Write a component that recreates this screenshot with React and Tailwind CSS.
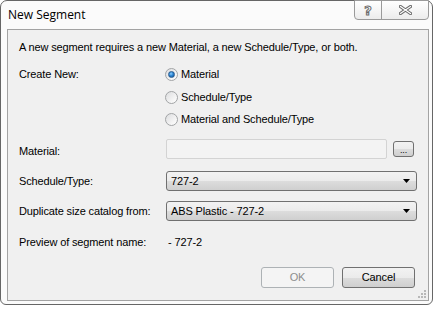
import React from "react";

function Radio({ checked, label, h }) {
  return (
    <div className={`flex items-center ${h}`}>
      <div className="w-[13px] h-[13px] rounded-full border border-[#a2a4a6] bg-[linear-gradient(135deg,#dcdddf,#f4f4f4_65%,#ffffff)] flex items-center justify-center">
        {checked && (
          <div className="w-[7px] h-[7px] rounded-full bg-[radial-gradient(circle_at_40%_35%,#8fd0ff,#2d85d2_45%,#0e4f93)] border border-[#2a5c8e]" />
        )}
      </div>
      <span className="ml-[3px] leading-[13px]">{label}</span>
    </div>
  );
}

function Select({ value }) {
  return (
    <div className="w-[251px] h-[20px] border border-[#707070] rounded-[3px] bg-[linear-gradient(#f2f2f2,#ebebeb_50%,#dddddd_50%,#cfcfcf)] flex items-center pl-[4px] pr-[6px] shrink-0">
      <span className="leading-[13px] flex-1">{value}</span>
      <svg width="7" height="4" viewBox="0 0 7 4">
        <path d="M0 0H7L3.5 4Z" fill="#000" />
      </svg>
    </div>
  );
}

export default function App() {
  return (
    <div className="w-[435px] h-[309px] bg-white font-['Liberation_Sans',Arial,sans-serif] text-[11px] tracking-[-0.13px] text-black">
      <div className="w-[433px] h-[305px] border border-[#666666] rounded-t-[7px] rounded-b-[6px] bg-[#fbfbfb] flex flex-col pl-[6px] pr-[3px] pb-[3px]">
        <div className="h-[28px] flex items-start shrink-0">
          <div className="pl-[1px] pt-[6px] text-[12px] leading-[16px] tracking-normal font-['Open_Sans',sans-serif] [text-shadow:0_0_6px_#ffffff]">
            New Segment
          </div>
          <div className="ml-auto -mt-[1px] flex h-[20px] border border-[#9a9a9a] rounded-b-[4px] overflow-hidden bg-[linear-gradient(#ffffff,#f6f6f6_50%,#ececec)]">
            <div className="w-[27px] h-full border-r border-[#9a9a9a] flex items-center justify-center">
              <span className="font-['DejaVu_Sans',sans-serif] text-[13px] font-bold leading-[13px] text-white [-webkit-text-stroke:1px_#6a6a6a]">?</span>
            </div>
            <div className="w-[46px] h-full flex items-center justify-center">
              <svg width="13" height="10" viewBox="0 0 13 10">
                <path d="M1.5 1.5L11.5 8.5M11.5 1.5L1.5 8.5" stroke="#6a6a6a" strokeWidth="3.2" strokeLinecap="square" />
                <path d="M1.5 1.5L11.5 8.5M11.5 1.5L1.5 8.5" stroke="#ffffff" strokeWidth="1.2" strokeLinecap="square" />
              </svg>
            </div>
          </div>
        </div>
        <div className="relative flex-1 border border-[#a3a3a3] bg-[#f0f0f0] pl-[11px] pr-[13px] pt-[11px] flex flex-col">
          <div className="h-[13px] leading-[13px] whitespace-nowrap">
            A new segment requires a new Material, a new Schedule/Type, or both.
          </div>
          <div className="flex mt-[9px]">
            <div className="w-[146px] h-[23px] leading-[13px] flex items-center shrink-0">Create New:</div>
            <div className="flex flex-col">
              <Radio checked label="Material" h="h-[23px]" />
              <Radio label="Schedule/Type" h="h-[22px]" />
              <Radio label="Material and Schedule/Type" h="h-[22px]" />
            </div>
          </div>
          <div className="flex items-start mt-[9px]">
            <div className="w-[147px] mt-[6px] leading-[13px] shrink-0">Material:</div>
            <div className="w-[221px] h-[20px] border border-[#d3d3d3] rounded-[2px] bg-[#f3f3f3] shrink-0" />
            <div className="ml-[6px] mt-[2px] w-[21px] h-[16px] border border-[#707070] rounded-[3px] bg-[linear-gradient(#f2f2f2,#ebebeb_50%,#dddddd_50%,#cfcfcf)] flex items-end justify-center shrink-0">
              <span className="text-[9px] leading-[11px]">...</span>
            </div>
          </div>
          <div className="flex items-center mt-[12px]">
            <div className="w-[147px] leading-[13px] shrink-0">Schedule/Type:</div>
            <Select value="727-2" />
          </div>
          <div className="flex items-center mt-[10px]">
            <div className="w-[147px] leading-[13px] shrink-0">Duplicate size catalog from:</div>
            <Select value="ABS Plastic - 727-2" />
          </div>
          <div className="flex mt-[15px] h-[13px] leading-[13px]">
            <div className="w-[149px] shrink-0">Preview of segment name:</div>
            <div>- 727-2</div>
          </div>
          <div className="flex justify-end gap-[8px] mt-[18px]">
            <div className="w-[73px] h-[21px] border border-[#adb2b5] rounded-[3px] bg-[#f4f4f4] flex items-center justify-center text-[#8d8d8d] leading-[13px]">
              OK
            </div>
            <div className="w-[73px] h-[21px] border border-[#707070] rounded-[3px] bg-[linear-gradient(#f2f2f2,#ebebeb_50%,#dddddd_50%,#cfcfcf)] flex items-center justify-center leading-[13px]">
              Cancel
            </div>
          </div>
          <div className="absolute right-[2px] bottom-[2px] w-[8px] h-[8px]">
            <div className="absolute right-0 bottom-0 w-[2px] h-[2px] bg-[#b8b8b8]" />
            <div className="absolute right-[3px] bottom-0 w-[2px] h-[2px] bg-[#b8b8b8]" />
            <div className="absolute right-[6px] bottom-0 w-[2px] h-[2px] bg-[#b8b8b8]" />
            <div className="absolute right-0 bottom-[3px] w-[2px] h-[2px] bg-[#b8b8b8]" />
            <div className="absolute right-[3px] bottom-[3px] w-[2px] h-[2px] bg-[#b8b8b8]" />
            <div className="absolute right-0 bottom-[6px] w-[2px] h-[2px] bg-[#b8b8b8]" />
          </div>
        </div>
      </div>
    </div>
  );
}
